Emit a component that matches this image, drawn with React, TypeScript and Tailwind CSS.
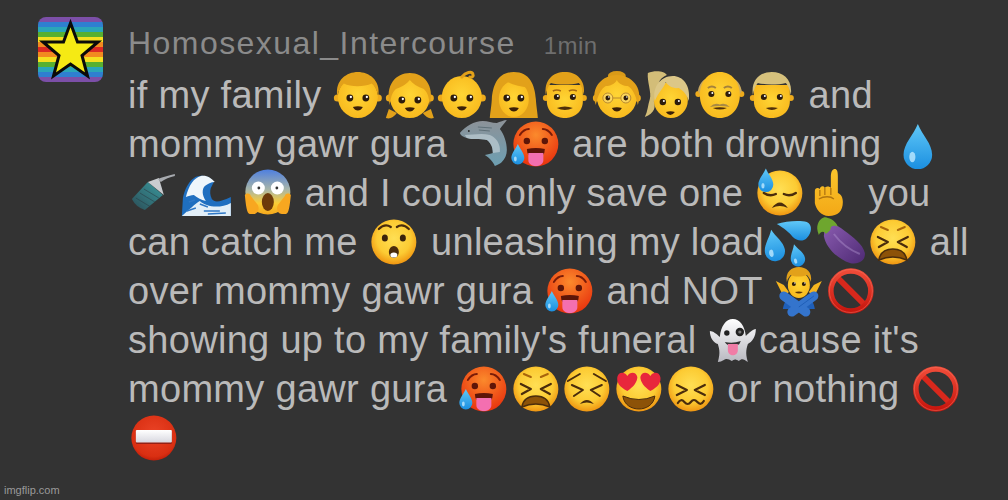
import { ReactNode } from 'react'

const Eyes = ({ y = 25, dx = 8, r = 3.4 }: { y?: number; dx?: number; r?: number }) => (
    <g>
        <circle cx={24 - dx} cy={y} r={r} fill="#2d1c0c" />
        <circle cx={24 + dx} cy={y} r={r} fill="#2d1c0c" />
        <circle cx={24 - dx + 1} cy={y - 1} r={r / 3} fill="#fff" />
        <circle cx={24 + dx + 1} cy={y - 1} r={r / 3} fill="#fff" />
    </g>
)

const SmallMouth = ({ y = 37 }: { y?: number }) => (
    <path d={`M19 ${y - 1}Q24 ${y - 2.5} 29 ${y - 1}Q27 ${y + 2.5} 24 ${y + 2.5}Q21 ${y + 2.5} 19 ${y - 1}Z`} fill="#3a2008" />
)

const Ball = () => <circle cx="24" cy="24" r="22.5" fill="url(#face)" />
const HotBall = () => <circle cx="24" cy="24" r="22.5" fill="url(#hot)" />

const Drop = ({ x, y, s = 1, rot = 0 }: { x: number; y: number; s?: number; rot?: number }) => (
    <g transform={`translate(${x} ${y}) rotate(${rot}) scale(${s})`}>
        <path d="M0 -10C2 -5 6.500 -1 6.500 4A6.500 6.500 0 0 1 -6.500 4C-6.500 -1 -2 -5 0 -10Z" fill="url(#water)" />
        <ellipse cx="-2.500" cy="5" rx="1.400" ry="2.400" fill="#bfe9ff" opacity="0.8" />
    </g>
)

const Head = ({ hair, back, skin = 'url(#skin)' }: { hair?: ReactNode; back?: ReactNode; skin?: string }) => (
    <g>
        {back}
        <circle cx="3.500" cy="27" r="3.500" fill="#eeab1c" />
        <circle cx="44.500" cy="27" r="3.500" fill="#eeab1c" />
        <ellipse cx="24" cy="26" rx="20" ry="21" fill={skin} />
        {hair}
    </g>
)

const boyHair = <path d="M3.500 25C1 9 13 1 24 1C35 1 47 9 44.500 25C43 19 41 15 38 12.500C30 16 17 16 10 12.500C7 15 5 19 3.500 25Z" fill="#e2a11a" />
const manHair = (fill: string) => <path d="M5 24C3 9 12 1 24 1C36 1 45 9 43 24C42 18 40 14 38 12C30 14 17 14 10 12C8 14 6 18 5 24Z" fill={fill} />

const Hot = () => (
    <g>
        <HotBall />
        <path d="M8 15Q12 9 17 9M31 9Q36 9 40 15" stroke="#7a1c08" strokeWidth="2" fill="none" strokeLinecap="round" />
        <circle cx="15" cy="21" r="3.200" fill="#5e1508" />
        <circle cx="33" cy="21" r="3.200" fill="#5e1508" />
        <path d="M15 29Q24 27 33 29Q33 33 31 35L17 35Q15 33 15 29Z" fill="#5e1508" />
        <path d="M16.500 33H31.500V40C31.500 48 16.500 48 16.500 40Z" fill="#f46fb0" />
        <Drop x={6} y={34} s={1} />
    </g>
)

const Tired = () => (
    <g>
        <Ball />
        <path d="M9 19L19 24L10 29M39 19L29 24L38 29" stroke="#4a2c0c" strokeWidth="2.200" fill="none" strokeLinecap="round" strokeLinejoin="round" />
        <path d="M12 9L19 12M36 9L29 12" stroke="#a8650c" strokeWidth="2" strokeLinecap="round" />
        <path d="M10 42Q12 31 24 31Q36 31 38 42Q24 36 10 42Z" fill="#8c5208" stroke="#4a2c0c" strokeWidth="1.500" />
    </g>
)

const Prohibited = () => (
    <g>
        <path d="M10 10L38 38" stroke="#d8281c" strokeWidth="6" />
        <circle cx="24" cy="24" r="20" fill="none" stroke="url(#red)" strokeWidth="5.500" />
        <circle cx="24" cy="24" r="21.500" fill="none" stroke="#f37a68" strokeWidth="0.800" opacity="0.6" />
    </g>
)

const art: Record<string, ReactNode> = {
    boy: (
        <g>
            <Head hair={boyHair} />
            <Eyes y={27} />
            <SmallMouth y={37} />
        </g>
    ),
    girl: (
        <g>
            <path d="M3 38L0 47Q6 49 11 42ZM45 38L48 47Q42 49 37 42Z" fill="#e2a11a" />
            <Head
                skin="url(#skin)"
                hair={<path d="M4 34C-1 14 10 2 24 2C38 2 49 14 44 34C43 26 42 22 38 18C32 16 27 13 24 9C21 13 16 16 10 18C6 22 5 26 4 34Z" fill="#e2a11a" />}
            />
            <Eyes y={29} />
            <SmallMouth y={38} />
        </g>
    ),
    baby: (
        <g>
            <Head />
            <path d="M24 6C28 1 34 0 35 3C36 5 34 7 32 6" stroke="#e2a11a" strokeWidth="3" fill="none" strokeLinecap="round" />
            <Eyes y={27} />
            <SmallMouth y={37} />
        </g>
    ),
    woman: (
        <g>
            <path d="M24 1C8 1 3 14 2 28C1.500 36 0 44 0 47H48C48 44 46.500 36 46 28C45 14 40 1 24 1Z" fill="#e2a11a" />
            <ellipse cx="24" cy="28" rx="15" ry="18" fill="url(#skin)" />
            <path d="M8 26C10 18 12 14 18 11C24 15 32 15 38 17C40 20 40 23 40 27C44 15 36 4 24 4C14 4 6 14 8 26Z" fill="#e2a11a" />
            <Eyes y={27} dx={7} />
            <SmallMouth y={38} />
        </g>
    ),
    man: (
        <g>
            <circle cx="5" cy="27" r="3" fill="#eeab1c" />
            <circle cx="43" cy="27" r="3" fill="#eeab1c" />
            <path d="M6 14H42V30C42 42 32 47 24 47C16 47 6 42 6 30Z" fill="url(#skin)" />
            {manHair('#e2a11a')}
            <path d="M12 20Q16 18 20 20M28 20Q32 18 36 20" stroke="#a86a10" strokeWidth="1.600" fill="none" />
            <Eyes y={26} r={3} />
            <path d="M16 37Q24 34 32 37Q24 41 16 37Z" fill="#4e2f0a" />
        </g>
    ),
    blondman: (
        <g>
            <circle cx="5" cy="27" r="3" fill="#eeab1c" />
            <circle cx="43" cy="27" r="3" fill="#eeab1c" />
            <path d="M6 14H42V30C42 42 32 47 24 47C16 47 6 42 6 30Z" fill="url(#skin)" />
            {manHair('#d6c17c')}
            <Eyes y={26} r={3} />
            <path d="M18 37Q24 35.500 30 37Q24 41 18 37Z" fill="#4e2f0a" />
        </g>
    ),
    granny: (
        <g>
            <ellipse cx="24" cy="5" rx="9" ry="5" fill="#d99a18" />
            <Head
                hair={<path d="M3 34C-3 16 10 4 24 4C38 4 51 16 45 34C43 24 40 18 35 15C31 15 26 13 24 9C22 13 17 15 13 15C8 18 5 24 3 34Z" fill="#e2a11a" />}
            />
            <circle cx="15" cy="27" r="5" fill="#fde9a8" fillOpacity="0.4" stroke="#b98a30" strokeWidth="1" />
            <circle cx="33" cy="27" r="5" fill="#fde9a8" fillOpacity="0.4" stroke="#b98a30" strokeWidth="1" />
            <path d="M20 27H28" stroke="#b98a30" strokeWidth="1" />
            <Eyes y={27} dx={9} r={2.400} />
            <SmallMouth y={38} />
        </g>
    ),
    blonde: (
        <g>
            <path d="M3 2C10 -1 20 0 22 4C18 6 15 8 14 12C14 18 13 24 9 30C11 36 10 42 0 46C3 40 3 34 5 28C7 22 2 10 3 2Z" fill="#d3bd78" />
            <ellipse cx="26" cy="29" rx="17" ry="18" fill="url(#skin)" />
            <path d="M10 30C7 16 16 5 28 5C38 5 46 14 44 30C42 24 39 20 34 17C28 18 22 14 21 11C19 17 13 22 10 30Z" fill="#dcc788" />
            <circle cx="18" cy="31" r="3.200" fill="#2d1c0c" />
            <circle cx="33" cy="31" r="3.200" fill="#2d1c0c" />
            <circle cx="19" cy="30" r="1" fill="#fff" />
            <circle cx="34" cy="30" r="1" fill="#fff" />
            <path d="M21 41Q26 39.500 30 41Q28 44 25.500 44Q23 44 21 41Z" fill="#3a2008" />
        </g>
    ),
    oldman: (
        <g>
            <circle cx="2.500" cy="23" r="3" fill="#eeab1c" />
            <circle cx="45.500" cy="23" r="3" fill="#eeab1c" />
            <path d="M2 20C4 10 10 7 13 7L6 26ZM46 20C44 10 38 7 35 7L42 26Z" fill="#c9a85e" />
            <path d="M24 1C36 1 44 11 44 24C44 38 35 47 24 47C13 47 4 38 4 24C4 11 12 1 24 1Z" fill="url(#skin)" />
            <path d="M12 17Q16 14 20 17M28 17Q32 14 36 17" stroke="#a4823c" strokeWidth="2" fill="none" />
            <Eyes y={23} dx={8.500} r={3} />
            <path d="M14 36Q19 31 24 33.500Q29 31 34 36Q24 34 14 36Z" fill="#a98a44" />
            <path d="M17 37Q24 35.500 31 37Q24 40 17 37Z" fill="#4e2f0a" />
        </g>
    ),
    shark: (
        <g>
            <path d="M0 13C6 6 14 1 23 1C28 1 32 3 37 3C40 2 44 0 47 0C45 3 42 6 40 9C44 14 47 22 47 30C47 35 45 39 42 42C41 43 38 45 35 46C34 43 30 38 25 35C28 34 31 34 33 33C33 26 30 22 27 20C20 18 12 20 7 18C4 17 1 16 0 13Z" fill="url(#shark)" />
            <path d="M7 18C12 20 20 18 27 20C30 22 33 26 33 33L40 32C41 24 36 17 30 15C22 13 12 15 5 15Z" fill="#bfcdd4" opacity="0.7" />
            <circle cx="9" cy="11" r="0.900" fill="#222" />
            <path d="M18 7L32 8M19 10L30 11" stroke="#5f7078" strokeWidth="1" />
        </g>
    ),
    droplet: <Drop x={24} y={26} s={2.200} />,
    shower: (
        <g>
            <path d="M2 30L18 13L33 26L15 41Q6 38 2 30Z" fill="url(#shower)" />
            <path d="M6 29L21 38M10 24L25 33M14 20L29 29" stroke="#2a3f47" strokeWidth="1" opacity="0.6" />
            <path d="M18 13L29 9L34 26Z" fill="#c9ccd0" />
            <path d="M28 10C33 8 40 6 45 5L45 7C40 8 35 10 31 13Z" fill="#a7aaaf" />
        </g>
    ),
    wave: (
        <g>
            <path d="M0 47L1 30C3 18 10 7 18 7C24 6 28 8 32 13L29 19C28 22 28 26 30 30C33 34 38 33 49 28V47Z" fill="#1f6fc0" />
            <path d="M4 28C7 16 12 9 19 7C25 6 29 9 33 13C29 13 26 15 23 17C20 20 20 26 24 32C19 31 15 28 12 26C9 26 7 27 4 28Z" fill="#eef6fb" />
            <path d="M0 47C6 42 14 34 18 32C24 38 38 40 49 34V47Z" fill="#e2eff8" />
            <path d="M5 42L14 39M22 42L38 42M18 35L26 38M26 45L44 44M7 33L13 31" stroke="#2f78c6" strokeWidth="1.400" />
        </g>
    ),
    scream: (
        <g>
            <circle cx="24" cy="23" r="22.500" fill="url(#scream)" />
            <circle cx="14.500" cy="19" r="6.500" fill="#fff" />
            <circle cx="33.500" cy="19" r="6.500" fill="#fff" />
            <circle cx="15" cy="19" r="1.400" fill="#333" />
            <circle cx="33" cy="19" r="1.400" fill="#333" />
            <ellipse cx="24" cy="33" rx="6" ry="9" fill="#6d3a0a" />
            <path d="M1 26C3 24 6 24 7 27L14 36C16 40 14 45 10 45H6C3 45 2 36 1 26ZM47 26C45 24 42 24 41 27L34 36C32 40 34 45 38 45H42C45 45 46 36 47 26Z" fill="#f8a720" />
        </g>
    ),
    downcast: (
        <g>
            <Ball />
            <path d="M8 24Q14 28 20 25M28 25Q34 28 40 24" stroke="#4a2c0c" strokeWidth="2.400" fill="none" strokeLinecap="round" />
            <path d="M16 39Q24 28 32 39Q24 35 16 39Z" fill="#4a2c0c" />
            <Drop x={10} y={11} s={1.150} />
        </g>
    ),
    pointup: (
        <g>
            <path d="M23 8C23 2 25 0 27 0C29 0 30 2 30 8V24C33 25 35 28 35 33C35 42 30 47 21 47C13 47 8 40 7 34L7 22C7 19 10 18 12 20C12 17 16 16 17 19C18 17 22 17 23 19Z" fill="url(#hand)" />
            <path d="M12 21V27M17 19V26M23 19V26M11 30C16 27 23 27 26 30" stroke="#b07610" strokeWidth="1.300" fill="none" />
        </g>
    ),
    hushed: (
        <g>
            <Ball />
            <path d="M9 11Q15 5 21 9M27 9Q33 5 39 11" stroke="#4a2c0c" strokeWidth="2.200" fill="none" strokeLinecap="round" />
            <ellipse cx="15" cy="20" rx="3" ry="3.600" fill="#3b230b" />
            <ellipse cx="33" cy="20" rx="3" ry="3.600" fill="#3b230b" />
            <ellipse cx="24" cy="34" rx="5" ry="6" fill="#4a2c0c" />
            <ellipse cx="24" cy="37" rx="3.500" ry="2.600" fill="#fff" />
        </g>
    ),
    sweat: (
        <g>
            <Drop x={8} y={27} s={1.550} rot={-10} />
            <Drop x={31} y={37} s={1.100} rot={-15} />
            <path d="M11 6C20 3 34 2 41 4C47 7 46 15 41 20C37 24 31 23 27 19C24 15 18 10 11 6Z" fill="url(#water)" />
        </g>
    ),
    eggplant: (
        <g>
            <path d="M7 8C13 4 20 7 27 13C35 19 45 26 47 35C48 43 40 47 32 45C20 41 8 30 6 18Z" fill="url(#egg)" />
            <path d="M0 6C2 0 7 -2 10 0C15 1 19 5 20 9C17 7 15 8 13 9C13 13 10 14 8 16C6 12 2 14 1 17C-1 12 -1 9 0 6Z" fill="#6ea62e" />
            <path d="M16 16C22 24 32 32 42 36" stroke="#b79bd4" strokeWidth="2" fill="none" opacity="0.4" />
        </g>
    ),
    tired: <Tired />,
    gesture: (
        <g>
            <path d="M1 14L9 18L14 25L9 30Z M47 14L39 18L34 25L39 30Z" fill="#f6b51e" />
            <ellipse cx="24" cy="18" rx="11" ry="13" fill="url(#skin)" />
            <path d="M12 15C10 5 17 0 24 0C31 0 38 5 36 15C35 11 33 9 32 8C27 10 20 10 16 8C15 9 13 11 12 15Z" fill="#e2a11a" />
            <Eyes y={17} dx={5} r={2} />
            <path d="M20 25Q24 24 28 25Q24 28 20 25Z" fill="#5a3309" />
            <path d="M8 42C9 36 11 33 14 31L24 36L34 31C37 33 39 36 40 42Z" fill="#1f5fb8" />
            <path d="M9 29L31 45M39 29L17 45" stroke="#3474cc" strokeWidth="9" strokeLinecap="round" />
            <path d="M39 29L24 40" stroke="#1f5fb8" strokeWidth="1" />
        </g>
    ),
    prohibited: <Prohibited />,
    ghost: (
        <g>
            <path d="M9 46C12 36 10 32 9 28C5 27 1 22 1 15C4 15 8 18 11 21C12 10 17 3 24 3C31 3 36 10 37 20C40 17 44 13 47 13C47 21 43 26 39 28C38 32 36 36 39 46C35 43 33 42 30 45C27 43 25 43 23 45C20 43 17 42 15 44C13 45 11 46 9 46Z" fill="url(#ghost)" />
            <circle cx="18" cy="17" r="2.700" fill="#222" />
            <circle cx="31" cy="16" r="4.200" fill="#222" />
            <circle cx="31" cy="16" r="1.600" fill="#777" />
            <path d="M16 26Q24 28 32 25Q31 28 29 29L19 29Q17 28 16 26Z" fill="#333" />
            <path d="M19 28H29V34C29 41 19 41 19 34Z" fill="#f07ca6" />
        </g>
    ),
    persevere: (
        <g>
            <Ball />
            <path d="M9 20L20 25L11 31M39 20L28 25L37 31" stroke="#4a2c0c" strokeWidth="2" fill="none" strokeLinecap="round" strokeLinejoin="round" />
            <path d="M5 16L17 9M43 16L31 9" stroke="#4a2c0c" strokeWidth="2" strokeLinecap="round" />
            <path d="M17 39Q24 31 31 39Q24 36 17 39Z" fill="#4a2c0c" />
        </g>
    ),
    hearteyes: (
        <g>
            <Ball />
            <path d="M14 27C6 23 3 18 4 13C5 8 11 7 14 12C17 7 23 8 24 13C24 18 20 23 14 27Z" fill="#e8263c" transform="translate(-1.500 -1)" />
            <path d="M34 27C28 23 24 18 24 13C25 8 31 7 34 12C37 7 43 8 44 13C45 18 42 23 34 27Z" fill="#e8263c" transform="translate(1.500 -1)" />
            <path d="M8 31Q24 38 40 31C39 40 31 44 24 44C17 44 9 40 8 31Z" fill="#8c5208" stroke="#4a2c0c" strokeWidth="1" />
        </g>
    ),
    confounded: (
        <g>
            <Ball />
            <path d="M10 20L20 25L10 30M38 20L28 25L38 30" stroke="#4a2c0c" strokeWidth="2.200" fill="none" strokeLinecap="round" strokeLinejoin="round" />
            <path d="M11 38Q14 33 17.500 37Q21 41 24 37Q27 33 30.500 37Q34 41 37 36" stroke="#4a2c0c" strokeWidth="2.200" fill="none" strokeLinecap="round" />
        </g>
    ),
    noentry: (
        <g>
            <circle cx="24" cy="24" r="22.500" fill="url(#red2)" />
            <rect x="6" y="17" width="36" height="13" fill="#962014" rx="1" />
            <rect x="6" y="16" width="36" height="12.500" fill="url(#bar)" rx="1" />
        </g>
    ),
}

function Emoji({ name }: { name: string }) {
    return (
        <svg viewBox="-1.500 0 51 48" className="inline-block h-[48px] w-[51.7px] overflow-visible align-[-11px]">
            {art[name]}
        </svg>
    )
}

function Defs() {
    return (
        <svg className="absolute h-0 w-0">
            <defs>
                <radialGradient id="face" cx="50%" cy="42%" r="58%">
                    <stop offset="0%" stopColor="#ffdf54" />
                    <stop offset="65%" stopColor="#fccb33" />
                    <stop offset="100%" stopColor="#ef9511" />
                </radialGradient>
                <radialGradient id="skin" cx="50%" cy="45%" r="60%">
                    <stop offset="0%" stopColor="#ffd535" />
                    <stop offset="100%" stopColor="#f8b81c" />
                </radialGradient>
                <radialGradient id="hot" cx="50%" cy="30%" r="70%">
                    <stop offset="0%" stopColor="#fb8a2c" />
                    <stop offset="100%" stopColor="#e8330e" />
                </radialGradient>
                <linearGradient id="water" x1="0" y1="0" x2="0" y2="1">
                    <stop offset="0%" stopColor="#60c8f8" />
                    <stop offset="100%" stopColor="#1b8fe0" />
                </linearGradient>
                <linearGradient id="red" x1="0" y1="0" x2="0" y2="1">
                    <stop offset="0%" stopColor="#f04b38" />
                    <stop offset="100%" stopColor="#c8160e" />
                </linearGradient>
                <radialGradient id="red2" cx="50%" cy="40%" r="60%">
                    <stop offset="0%" stopColor="#ea4326" />
                    <stop offset="85%" stopColor="#d92f12" />
                    <stop offset="100%" stopColor="#c21f0a" />
                </radialGradient>
                <linearGradient id="bar" x1="0" y1="0" x2="0" y2="1">
                    <stop offset="0%" stopColor="#ffffff" />
                    <stop offset="100%" stopColor="#d8d8e0" />
                </linearGradient>
                <linearGradient id="shark" x1="0" y1="0" x2="0" y2="1">
                    <stop offset="0%" stopColor="#8d9298" />
                    <stop offset="100%" stopColor="#6d9fb2" />
                </linearGradient>
                <linearGradient id="shower" x1="1" y1="0" x2="0" y2="1">
                    <stop offset="0%" stopColor="#3a9a9f" />
                    <stop offset="100%" stopColor="#2b4c55" />
                </linearGradient>
                <linearGradient id="scream" x1="0" y1="0" x2="0" y2="1">
                    <stop offset="0%" stopColor="#4e7fe0" />
                    <stop offset="45%" stopColor="#a9b6a8" />
                    <stop offset="75%" stopColor="#fbcd35" />
                    <stop offset="100%" stopColor="#f6a81c" />
                </linearGradient>
                <linearGradient id="hand" x1="0" y1="0" x2="0" y2="1">
                    <stop offset="0%" stopColor="#fbc52c" />
                    <stop offset="100%" stopColor="#f3a816" />
                </linearGradient>
                <linearGradient id="egg" x1="0" y1="0" x2="1" y2="1">
                    <stop offset="0%" stopColor="#8a5cb0" />
                    <stop offset="100%" stopColor="#4e2a74" />
                </linearGradient>
                <linearGradient id="ghost" x1="0" y1="0" x2="0" y2="1">
                    <stop offset="0%" stopColor="#ffffff" />
                    <stop offset="100%" stopColor="#b8b8c0" />
                </linearGradient>
            </defs>
        </svg>
    )
}

const stripes = ['#7c4fa8', '#2f7fd0', '#2aa6b8', '#58b030', '#f5e020', '#f28a20', '#dc2a24', '#f28a20', '#f5e020', '#58b030', '#2aa6b8', '#2f7fd0', '#7c4fa8']

function Avatar() {
    return (
        <svg viewBox="0 0 65 65" className="h-[65px] w-[65px] shrink-0 rounded-[8px]">
            {stripes.map((c, i) => (
                <rect key={i} x="0" y={i * 5} width="65" height="5.100" fill={c} />
            ))}
            <path
                d="M32.500 6L39.500 25H60L44 38.500L49.500 59L32.500 47L15.500 59L21 38.500L5 25H25.500Z"
                fill="#f5ea14"
                stroke="#0a0a0a"
                strokeWidth="3"
            />
        </svg>
    )
}

const lines: (string | string[])[][] = [
    ['if my family ', ['boy', 'girl', 'baby', 'woman', 'man', 'granny', 'blonde', 'oldman', 'blondman'], ' and'],
    ['mommy gawr gura ', ['shark', 'hot'], ' are both drowning ', ['droplet']],
    [['shower', 'wave'], ' ', ['scream'], ' and I could only save one ', ['downcast', 'pointup'], ' you'],
    ['can catch me ', ['hushed'], ' unleashing my load', ['sweat', 'eggplant', 'tired'], ' all'],
    ['over mommy gawr gura ', ['hot'], ' and NOT ', ['gesture', 'prohibited']],
    ["showing up to my family's funeral ", ['ghost'], "cause it's"],
    ['mommy gawr gura ', ['hot', 'tired', 'persevere', 'hearteyes', 'confounded'], ' or nothing ', ['prohibited']],
    [['noentry']],
]

art.hot = <Hot />

export default function App() {
    return (
        <div className="relative h-[500px] w-[1008px] overflow-hidden bg-[#333333] font-['Liberation_Sans',Arial,sans-serif]">
            <Defs />
            <div className="flex gap-[25px] pl-[38px] pt-[17px]">
                <Avatar />
                <div className="flex flex-col">
                    <div className="flex h-[54px] items-baseline gap-[28px] pt-[6px]">
                        <span className="text-[32px] leading-[40px] tracking-[1.45px] text-[#8b8b8b]">Homosexual_Intercourse</span>
                        <span className="text-[24px] leading-[40px] tracking-[0.5px] text-[#6e6e6e]">1min</span>
                    </div>
                    {lines.map((line, i) => (
                        <div key={i} className="h-[49px] whitespace-pre text-[38px] leading-[49px] tracking-[0.3px] text-[#bababa]">
                            {line.map((part, j) =>
                                typeof part === 'string' ? (
                                    <span key={j}>{part}</span>
                                ) : (
                                    part.map((name, k) => <Emoji key={k} name={name} />)
                                ),
                            )}
                        </div>
                    ))}
                </div>
            </div>
            <span className="absolute bottom-[3px] left-[4px] text-[11px] leading-[14px] text-[#9a9a9a]">imgflip.com</span>
        </div>
    )
}
